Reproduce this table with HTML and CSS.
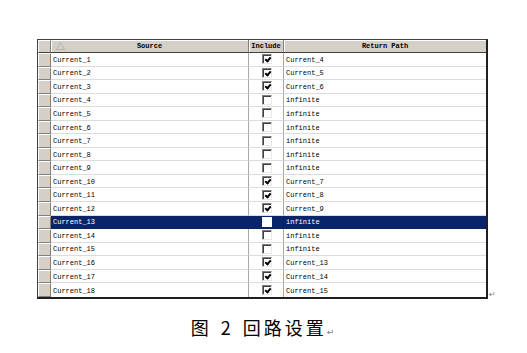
FILE: index.html
```html
<!DOCTYPE html>
<html>
<head>
<meta charset="utf-8">
<link rel="stylesheet" href="styles.css">
</head>
<body>
<div class="page">
  <div class="tablewrap">
    <div class="grid">
      <div class="row head">
        <div class="rh"></div>
        <div class="c src"><svg class="sort" width="9" height="8" viewBox="0 0 9 8"><path d="M4.5 0.5 L8.5 7.5 L0.5 7.5 Z" fill="none" stroke="#b8b4ac" stroke-width="1"/></svg>Source</div>
        <div class="c inc">Include</div>
        <div class="c ret">Return Path</div>
      </div>
      <div class="row"><div class="rh"></div><div class="c src">Current_1</div><div class="c inc"><span class="cb on"></span></div><div class="c ret">Current_4</div></div>
      <div class="row"><div class="rh"></div><div class="c src">Current_2</div><div class="c inc"><span class="cb on"></span></div><div class="c ret">Current_5</div></div>
      <div class="row"><div class="rh"></div><div class="c src">Current_3</div><div class="c inc"><span class="cb on"></span></div><div class="c ret">Current_6</div></div>
      <div class="row"><div class="rh"></div><div class="c src">Current_4</div><div class="c inc"><span class="cb"></span></div><div class="c ret">infinite</div></div>
      <div class="row"><div class="rh"></div><div class="c src">Current_5</div><div class="c inc"><span class="cb"></span></div><div class="c ret">infinite</div></div>
      <div class="row"><div class="rh"></div><div class="c src">Current_6</div><div class="c inc"><span class="cb"></span></div><div class="c ret">infinite</div></div>
      <div class="row"><div class="rh"></div><div class="c src">Current_7</div><div class="c inc"><span class="cb"></span></div><div class="c ret">infinite</div></div>
      <div class="row"><div class="rh"></div><div class="c src">Current_8</div><div class="c inc"><span class="cb"></span></div><div class="c ret">infinite</div></div>
      <div class="row"><div class="rh"></div><div class="c src">Current_9</div><div class="c inc"><span class="cb"></span></div><div class="c ret">infinite</div></div>
      <div class="row"><div class="rh"></div><div class="c src">Current_10</div><div class="c inc"><span class="cb on"></span></div><div class="c ret">Current_7</div></div>
      <div class="row"><div class="rh"></div><div class="c src">Current_11</div><div class="c inc"><span class="cb on"></span></div><div class="c ret">Current_8</div></div>
      <div class="row"><div class="rh"></div><div class="c src">Current_12</div><div class="c inc"><span class="cb on"></span></div><div class="c ret">Current_9</div></div>
      <div class="row sel"><div class="rh"></div><div class="c src">Current_13</div><div class="c inc"><span class="cb"></span></div><div class="c ret">infinite</div></div>
      <div class="row"><div class="rh"></div><div class="c src">Current_14</div><div class="c inc"><span class="cb"></span></div><div class="c ret">infinite</div></div>
      <div class="row"><div class="rh"></div><div class="c src">Current_15</div><div class="c inc"><span class="cb"></span></div><div class="c ret">infinite</div></div>
      <div class="row"><div class="rh"></div><div class="c src">Current_16</div><div class="c inc"><span class="cb on"></span></div><div class="c ret">Current_13</div></div>
      <div class="row"><div class="rh"></div><div class="c src">Current_17</div><div class="c inc"><span class="cb on"></span></div><div class="c ret">Current_14</div></div>
      <div class="row last"><div class="rh"></div><div class="c src">Current_18</div><div class="c inc"><span class="cb on"></span></div><div class="c ret">Current_15</div></div>
    </div>
    <span class="pmark">↵</span>
  </div>
  <div class="caption">图 2 回路设置<span class="pmark2">↵</span></div>
</div>
</body>
</html>
```
FILE: styles.css
```css
html, body {
  margin: 0;
  padding: 0;
  background: #ffffff;
}
.page {
  width: 527px;
  height: 353px;
  padding-top: 39px;
  box-sizing: border-box;
}
.tablewrap {
  display: flex;
  align-items: flex-end;
  padding-left: 37px;
}
.grid {
  width: 451px;
  border-top: 1px solid #404040;
  border-left: 1px solid #404040;
  border-right: 2px solid #202020;
  border-bottom: 2px solid #202020;
  box-sizing: border-box;
  font-family: "Liberation Mono", "DejaVu Sans Mono", monospace;
  font-size: 7px;
  color: #000;
}
.row {
  display: grid;
  grid-template-columns: 13px 198px 35px 1fr;
  height: 13.55px;
  box-sizing: border-box;
}
.row .c {
  border-bottom: 1px solid #dcdcdc;
  border-right: 1px solid #a8a8a8;
  display: flex;
  align-items: center;
  padding-left: 2px;
  padding-top: 1px;
  white-space: nowrap;
  overflow: hidden;
}
.row .c.ret {
  border-right: none;
}
.row.last .c {
  border-bottom: none;
}
.rh {
  background: #d4d0c8;
  border-top: 1px solid #ffffff;
  border-left: 1px solid #ffffff;
  border-right: 1px solid #808080;
  border-bottom: 1px solid #808080;
  box-sizing: border-box;
}
.row.head {
  height: 13px;
}
.row.head .c {
  background: #d4d0c8;
  border-bottom: 1px solid #404040;
  border-right: 1px solid #808080;
  box-shadow: inset 1px 1px 0 #ffffff;
  justify-content: center;
  font-weight: bold;
  position: relative;
  padding-left: 0;
  padding-top: 0;
}
.row.head .c.ret {
  border-right: none;
}
.row.head .rh {
  border-bottom: 1px solid #404040;
}
.sort {
  position: absolute;
  left: 5px;
  top: 2px;
}
.c.inc {
  justify-content: center;
  padding-left: 0;
}
.row .c.inc {
  padding-top: 0;
}
.cb {
  width: 10px;
  height: 10px;
  box-sizing: border-box;
  background: #ffffff;
  border-top: 1px solid #808080;
  border-left: 1px solid #808080;
  border-right: 1px solid #e8e8e8;
  border-bottom: 1px solid #e8e8e8;
  box-shadow: inset 1px 1px 0 #404040;
  position: relative;
  margin-left: 2px;
}
.cb.on::after {
  content: "";
  position: absolute;
  left: 3px;
  top: 1px;
  width: 2px;
  height: 4px;
  border-right: 2px solid #000;
  border-bottom: 2px solid #000;
  transform: rotate(40deg);
}
.row.sel .c {
  background: #0a246a;
  color: #ffffff;
  border-bottom-color: #0a246a;
  border-right-color: #0a246a;
}
.row.sel .cb {
  border-color: #ffffff;
  box-shadow: none;
}
.pmark {
  font-family: "DejaVu Sans", sans-serif;
  font-size: 8px;
  color: #808080;
  line-height: 8px;
  margin-left: 1px;
}
.caption {
  margin-top: 16px;
  text-align: center;
  font-family: "Noto Sans CJK SC", "Noto Sans CJK JP", sans-serif;
  font-size: 18px;
  letter-spacing: 3px;
  word-spacing: 2px;
  color: #000;
  line-height: 24px;
  padding-right: 2px;
}
.pmark2 {
  font-family: "DejaVu Sans", sans-serif;
  font-size: 9px;
  color: #808080;
  letter-spacing: 0;
}
```
